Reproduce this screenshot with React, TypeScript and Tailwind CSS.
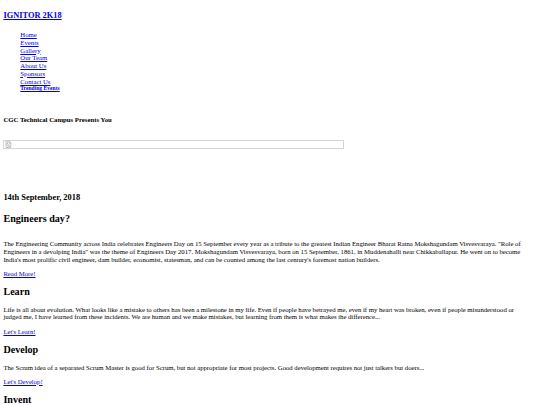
import React from "react";

const navLinks = ["Home", "Events", "Gallery", "Our Team", "About Us", "Sponsors", "Contact Us"];

function BrokenImage() {
  return (
    <div className="mt-[16.1px] w-[341px] h-[9px] border border-[#d4d4d4] relative">
      <svg className="absolute left-[1px] top-[0.5px]" width="7" height="7" viewBox="0 0 16 16">
        <path d="M2 1h8l4 4v4l-2 2-2-2-3 3-2-2-3 3z" fill="#f4f4f4" stroke="#8a8a8a" strokeWidth="1" />
        <path d="M10 1v4h4" fill="none" stroke="#8a8a8a" strokeWidth="1" />
        <path d="M4 8l2-2 2 2" fill="none" stroke="#4b9a3a" strokeWidth="1.2" />
        <circle cx="5" cy="4.5" r="1" fill="#3b78c2" />
        <path d="M3 15h10v-3l-2 2-2-2-3 3z" fill="#f4f4f4" stroke="#8a8a8a" strokeWidth="1" />
      </svg>
    </div>
  );
}

function Section({ title, children, link, top }: { title: string; children?: React.ReactNode; link?: string; top: string }) {
  return (
    <>
      <h2 className={`${top} text-[10.125px] font-bold leading-[11.64px] tracking-normal`}>{title}</h2>
      {children}
      {link && (
        <p className="mt-[6.4px]">
          <a href="#" className="text-[#0000ee] underline">
            {link}
          </a>
        </p>
      )}
    </>
  );
}

export default function App() {
  return (
    <div className="min-h-screen bg-white pl-[3.4px] pr-[2px] font-['Liberation_Serif','Times_New_Roman',serif] text-[6.75px] leading-[7.76px] text-black">
      <h3 className="pt-[11.2px] text-[8.4px] font-bold leading-[9.66px]">
        <a href="#" className="text-[#0000ee] underline">
          IGNITOR 2K18
        </a>
      </h3>

      <ul className="mt-[10.2px] pl-[16.9px]">
        {navLinks.map((l) => (
          <li key={l}>
            <a href="#" className="text-[#0000ee] underline">
              {l}
            </a>
          </li>
        ))}
        <li className="text-[5.6px] font-bold">
          <a href="#" className="text-[#0000ee] underline">
            Trending Events
          </a>
        </li>
      </ul>

      <h4 className="mt-[22.9px] font-bold">CGC Technical Campus Presents You</h4>

      <BrokenImage />

      <h3 className="mt-[44.2px] text-[8.4px] font-bold leading-[9.66px]">14th September, 2018</h3>

      <div className="tracking-[-0.03px]">
        <Section title="Engineers day?" top="mt-[10.4px]" link="Read More!">
          <p className="mt-[15.2px]">
            The Engineering Community across India celebrates Engineers Day on 15 September every year as a tribute to
            the greatest Indian Engineer Bharat Ratna Mokshagundam Visvesvaraya. "Role of
            <br />
            Engineers in a devolping India" was the theme of Engineers Day 2017. Mokshagundam Visvesvaraya, born on 15
            September, 1861, in Muddenahalli near Chikkaballapur. He went on to become
            <br />
            India's most prolific civil engineer, dam builder, economist, statesman, and can be counted among the last
            century's foremost nation builders.
          </p>
        </Section>

        <Section title="Learn" top="mt-[8.3px]" link="Let's Learn!">
          <p className="mt-[8.3px]">
            Life is all about evolution. What looks like a mistake to others has been a milestone in my life. Even if
            people have betrayed me, even if my heart was broken, even if people misunderstood or
            <br />
            judged me, I have learned from these incidents. We are human and we make mistakes, but learning from them is
            what makes the difference...
          </p>
        </Section>

        <Section title="Develop" top="mt-[8.3px]" link="Let's Develop!">
          <p className="mt-[8.3px]">
            The Scrum idea of a separated Scrum Master is good for Scrum, but not appropriate for most projects. Good
            development requires not just talkers but doers...
          </p>
        </Section>

        <Section title="Invent" top="mt-[8.3px]" />
      </div>
    </div>
  );
}
